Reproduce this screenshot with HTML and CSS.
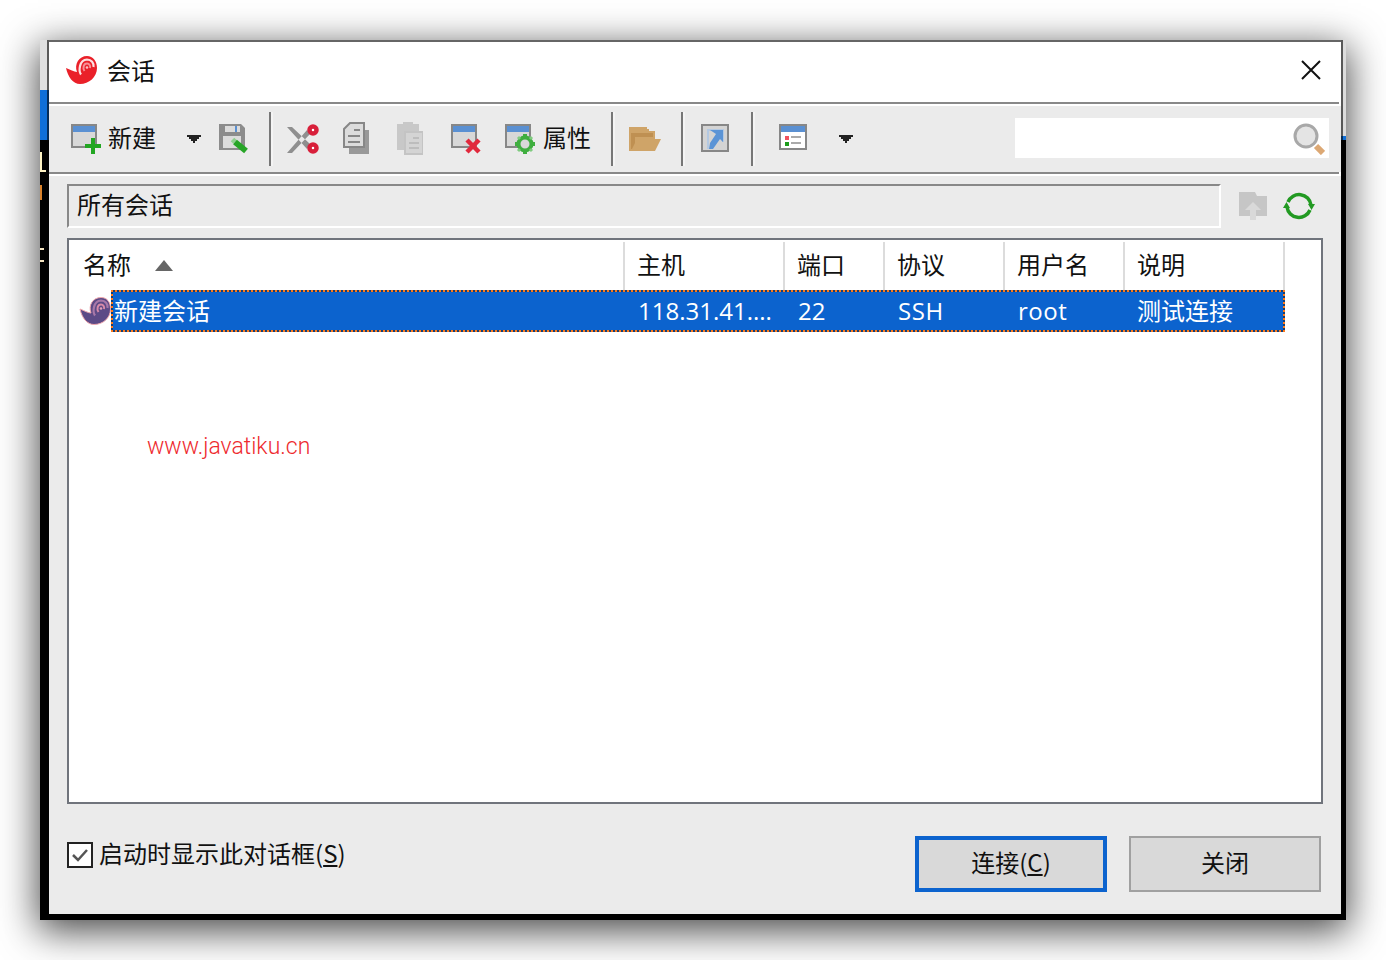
FILE: index.html
```html
<!DOCTYPE html>
<html lang="zh-CN">
<head>
<meta charset="utf-8">
<title>会话</title>
<link rel="stylesheet" href="styles.css">
</head>
<body>
<div class="stage">
<div class="frame">
<div class="window">

  <header class="titlebar">
    <svg class="logo" width="32" height="28" viewBox="0 0 32 28">
      <path fill="#ea2029" d="M1 12C5 13.500 9 16 12 16C9 8 14 0 22 0C28 0 32 5 32 12C32 21 24 28 15 28C8 28 3 21 1 12Z"/>
      <path fill="none" stroke="#fde0e0" stroke-width="2.200" d="M16 18.500C13.500 15 14 4 22 3.500C26.500 3.500 29 7 28.500 11"/>
      <path fill="none" stroke="#f68f94" stroke-width="2" d="M19.500 15C17.500 12 18.500 7.500 22 7.500C24.500 7.500 25.500 10 25 12"/>
      <circle cx="22" cy="11.500" r="1.300" fill="#f9c0c2"/>
    </svg>
    <span class="title-text">会话</span>
    <svg class="close" width="20" height="20" viewBox="0 0 20 20">
      <path fill="none" stroke="#111" stroke-width="2" d="M1 1L19 19M19 1L1 19"/>
    </svg>
  </header>

  <div class="rule"></div>

  <div class="toolbar">
    <svg class="ic-new" width="30" height="34" viewBox="0 0 30 34">
      <rect x="1" y="3" width="24" height="22" fill="#d8d8d8" stroke="#878787" stroke-width="2"/>
      <rect x="2" y="4" width="22" height="6" fill="#5a90d2"/>
      <path fill="#22a622" d="M20 16h4v6h6v4h-6v6h-4v-6h-6v-4h6z"/>
    </svg>
    <span class="tb-label tb-label-new">新建</span>
    <svg class="arrow arrow-new" width="14" height="8" viewBox="0 0 14 8"><path fill="#222" d="M0 0H14V2H12V4H10V6H8V8H6V6H4V4H2V2H0Z"/></svg>
    <svg class="ic-save" width="30" height="34" viewBox="0 0 30 34">
      <path fill="#8c8c8c" d="M0 2H22L26 6V28H0Z"/>
      <rect x="6" y="4" width="15" height="6" fill="#dcdcdc"/>
      <rect x="16" y="4" width="2" height="6" fill="#5a90d2"/>
      <rect x="4" y="14" width="18" height="12" fill="#dcdcdc"/>
      <path fill="none" stroke="#8fd08f" stroke-width="5" d="M13.500 17.500L16 20"/>
      <path fill="none" stroke="#27a527" stroke-width="6" d="M16 20L27 29"/>
    </svg>
    <span class="tb-sep tb-sep-a"></span>
    <svg class="ic-cut" width="32" height="34" viewBox="0 0 32 34">
      <path fill="#8f8f8f" d="M0 5H5L23 22L20 27ZM0 31H5L23 12L20 8Z"/>
      <circle cx="26" cy="8" r="3.500" fill="#fff" stroke="#d81f3a" stroke-width="4.500"/>
      <circle cx="26" cy="26" r="3.500" fill="#fff" stroke="#d81f3a" stroke-width="4.500"/>
    </svg>
    <svg class="ic-copy" width="26" height="34" viewBox="0 0 26 34">
      <rect x="6" y="8" width="20" height="24" fill="#999"/>
      <path fill="#dcdcdc" stroke="#878787" stroke-width="2" d="M7 1H21V25H1V7Z"/>
      <path fill="none" stroke="#878787" stroke-width="2" d="M11 8H17M5 14H17M5 20H17"/>
    </svg>
    <svg class="ic-paste" width="26" height="34" viewBox="0 0 26 34">
      <path fill="#c8c8c8" d="M6 0H16V2H22V28H0V2H6Z"/>
      <rect x="8" y="10" width="18" height="22" fill="#d4d4d4" stroke="#c4c4c4" stroke-width="2"/>
      <path fill="none" stroke="#bdbdbd" stroke-width="2" d="M16 16H22M12 21H22M12 26H22"/>
    </svg>
    <svg class="ic-del" width="30" height="34" viewBox="0 0 30 34">
      <rect x="1" y="3" width="24" height="22" fill="#d8d8d8" stroke="#878787" stroke-width="2"/>
      <rect x="2" y="4" width="22" height="6" fill="#5a90d2"/>
      <path fill="none" stroke="#e1283c" stroke-width="4.500" d="M16 18L28 30M28 18L16 30"/>
    </svg>
    <svg class="ic-prop" width="30" height="34" viewBox="0 0 30 34">
      <rect x="1" y="3" width="24" height="22" fill="#d8d8d8" stroke="#878787" stroke-width="2"/>
      <rect x="2" y="4" width="22" height="6" fill="#5a90d2"/>
      <circle cx="20" cy="22" r="6.500" fill="#d8d8d8" stroke="#3fae3f" stroke-width="4"/>
      <path fill="none" stroke="#3fae3f" stroke-width="4" d="M20 12V15M20 29V32M10 22H13M27 22H30"/>
      <path fill="none" stroke="#7fcb7f" stroke-width="3" d="M13 15L15 17M27 15L25 17M13 29L15 27M27 29L25 27"/>
    </svg>
    <span class="tb-label tb-label-prop">属性</span>
    <span class="tb-sep tb-sep-b"></span>
    <svg class="ic-folder" width="32" height="34" viewBox="0 0 32 34">
      <path fill="#cfa468" d="M0 5H18V7H20V9H26V29H0Z"/>
      <rect x="2" y="11" width="22" height="4" fill="#bf9052"/>
      <path fill="#bf9052" d="M2 15H6V25H4V27H2Z"/>
      <path fill="#cfa468" d="M8 17H32L26 29H2Z"/>
    </svg>
    <span class="tb-sep tb-sep-b"></span>
    <svg class="ic-link" width="28" height="34" viewBox="0 0 28 34">
      <rect x="1" y="3" width="26" height="26" fill="#d4d4d4" stroke="#878787" stroke-width="2"/>
      <path fill="#b4c9e2" d="M6 7H23V20H21V9H8V27H6Z"/>
      <path fill="#5b94d6" d="M9 8H22V20L19 17L12 27H8L9 21L15 12Z"/>
    </svg>
    <span class="tb-sep tb-sep-c"></span>
    <svg class="ic-list" width="28" height="34" viewBox="0 0 28 34">
      <rect x="1" y="3" width="26" height="24" fill="#fff" stroke="#878787" stroke-width="2"/>
      <rect x="2" y="4" width="24" height="6" fill="#5a90d2"/>
      <rect x="6" y="14" width="4" height="4" fill="#f0525e"/>
      <rect x="6" y="20" width="4" height="4" fill="#1c9c1c"/>
      <path fill="none" stroke="#aaa" stroke-width="2" d="M12 15H22M12 21H22"/>
    </svg>
    <svg class="arrow arrow-list" width="14" height="8" viewBox="0 0 14 8"><path fill="#222" d="M0 0H14V2H12V4H10V6H8V8H6V6H4V4H2V2H0Z"/></svg>
    <div class="search">
      <svg width="32" height="32" viewBox="0 0 32 32">
        <circle cx="13" cy="13" r="11" fill="#e4e4e4" stroke="#a8a8a8" stroke-width="3"/>
        <path fill="none" stroke="#dca874" stroke-width="6" d="M23 23L30 30"/>
      </svg>
    </div>
  </div>

  <div class="rule"></div>

  <main class="content">
    <div class="path-row">
      <div class="path-box">所有会话</div>
      <svg class="ic-up" width="28" height="28" viewBox="0 0 28 28">
        <path fill="#c6c6c6" d="M0 0H16L18 4H28V24H0Z"/>
        <path fill="#d9d9d9" d="M14 10L22 18H17V28H11V18H6Z"/>
      </svg>
      <svg class="ic-refresh" width="32" height="28" viewBox="0 0 32 28">
        <path fill="none" stroke="#229a22" stroke-width="3.500" d="M5 10A12 12 0 0 1 28 13"/>
        <path fill="none" stroke="#229a22" stroke-width="3.500" d="M27 18A12 12 0 0 1 4 15"/>
        <path fill="#229a22" d="M25 12H32L28.500 18ZM0 16H7L3.500 10Z"/>
      </svg>
    </div>

    <section class="list">
      <div class="list-head">
        <div class="hcell hcell-name">名称<svg class="sort" width="18" height="11" viewBox="0 0 18 11"><path fill="#666" d="M9 0L18 11H0Z"/></svg></div>
        <div class="hcell hcell-host">主机</div>
        <div class="hcell hcell-port">端口</div>
        <div class="hcell hcell-proto">协议</div>
        <div class="hcell hcell-user">用户名</div>
        <div class="hcell hcell-note">说明</div>
      </div>
      <div class="list-row">
        <svg class="row-icon" width="32" height="30" viewBox="0 0 32 28">
          <path fill="#5c4a86" stroke="#f0a8ae" stroke-width="1" d="M1 12C5 13.500 9 16 12 16C9 8 14 0.500 22 0.500C28 0.500 31.500 5 31.500 12C31.500 21 24 27.500 15 27.500C8 27.500 3 21 1 12Z"/>
          <path fill="none" stroke="#a878a8" stroke-width="2.200" d="M16 18.500C13.500 15 14 4 22 3.500C26.500 3.500 29 7 28.500 11"/>
          <path fill="none" stroke="#d88aa8" stroke-width="2" d="M19.500 15C17.500 12 18.500 7.500 22 7.500C24.500 7.500 25.500 10 25 12"/>
          <circle cx="22" cy="11.500" r="1.300" fill="#e0a0b8"/>
        </svg>
        <div class="band">
          <span class="cell cell-name">新建会话</span>
          <span class="cell cell-host">118.31.41....</span>
          <span class="cell cell-port">22</span>
          <span class="cell cell-proto">SSH</span>
          <span class="cell cell-user">root</span>
          <span class="cell cell-note">测试连接</span>
        </div>
      </div>
      <a class="watermark">www.javatiku.cn</a>
    </section>

    <footer class="footer">
      <label class="startup">
        <span class="checkbox">
          <svg width="22" height="22" viewBox="0 0 22 22"><path fill="none" stroke="#555" stroke-width="2.500" d="M4 11L9 16L18 6"/></svg>
        </span>
        <span class="startup-text">启动时显示此对话框(<u>S</u>)</span>
      </label>
      <button class="btn btn-primary" type="button">连接(<u>C</u>)</button>
      <button class="btn btn-plain" type="button">关闭</button>
    </footer>
  </main>

</div>
</div>
</div>
</body>
</html>
```
FILE: styles.css
```css
* { box-sizing: border-box; }

html, body {
  margin: 0;
  background: #fff;
}

body {
  font-family: "Noto Sans CJK SC", "Noto Sans", sans-serif;
  font-size: 24px;
  color: #111;
}

.stage {
  width: 1386px;
  height: 960px;
  padding: 40px;
  overflow: hidden;
}

.frame {
  width: 1306px;
  height: 880px;
  padding: 0 3px 6px 7px;
  box-shadow: 0 9px 36px 2px rgba(0, 0, 0, 0.72);
  background:
    linear-gradient(#fff3c4, #fff3c4) 0 112px / 2px 20px no-repeat,
    linear-gradient(#fff3c4, #fff3c4) 0 130px / 6px 2px no-repeat,
    linear-gradient(#d9822b, #d9822b) 0 145px / 2px 15px no-repeat,
    linear-gradient(#f3e3c0, #f3e3c0) 0 208px / 4px 2px no-repeat,
    linear-gradient(#f3e3c0, #f3e3c0) 0 220px / 4px 2px no-repeat,
    linear-gradient(#000, #000) left bottom / 100% 6px no-repeat,
    linear-gradient(#e0e0e0 0 50px, #0f6fd8 50px 100px, #000 100px) left top / 9px 100% no-repeat,
    linear-gradient(#dcdcdc 0 96px, #0f6fd8 96px 100px, #000 100px) right top / 5px 100% no-repeat,
    #fff;
}

.window {
  height: 874px;
  display: flex;
  flex-direction: column;
  border: 2px solid rgba(0, 0, 0, 0.6);
  border-bottom: 0;
}

/* title bar */
.titlebar {
  flex: none;
  height: 60px;
  padding: 0 20px 4px 16px;
  display: flex;
  align-items: center;
  background: #fff;
}

.title-text {
  margin-left: 10px;
  line-height: 30px;
}

.close { margin-left: auto; }

.rule {
  flex: none;
  height: 4px;
  border-right: 2px solid #fff;
  background: linear-gradient(#888 50%, #fff 50%);
}

/* toolbar */
.toolbar {
  flex: none;
  height: 66px;
  padding: 0 12px 0 22px;
  display: flex;
  align-items: center;
  background: #ebebeb;
}

.toolbar svg { flex: none; }

.tb-label {
  line-height: 30px;
  margin-bottom: 4px;
}

.tb-label-new { margin-left: 7px; }
.tb-label-prop { margin-left: 8px; }

.arrow-new { margin-left: 31px; }
.arrow-list { margin-left: 32px; }

.ic-save { margin-left: 18px; }
.ic-cut { margin-left: 16px; }
.ic-copy { margin-left: 24px; }
.ic-paste { margin-left: 28px; }
.ic-del { margin-left: 28px; }
.ic-prop { margin-left: 24px; }
.ic-folder { margin-left: 16px; }
.ic-link { margin-left: 18px; }
.ic-list { margin-left: 26px; }

.tb-sep {
  flex: none;
  width: 2px;
  height: 54px;
  background: #777;
  box-shadow: 2px 0 0 #f4f4f4;
}

.tb-sep-a,
.tb-sep-b { margin-left: 20px; }
.tb-sep-c { margin-left: 22px; }

.search {
  margin: 0 0 2px auto;
  width: 314px;
  height: 40px;
  padding: 2px 4px 0 0;
  display: flex;
  align-items: center;
  justify-content: flex-end;
  background: #fff;
}

/* content */
.content {
  flex: 1;
  min-height: 0;
  padding: 8px 18px 0;
  display: flex;
  flex-direction: column;
  background: #ebebeb;
}

.path-row {
  flex: none;
  height: 44px;
  display: flex;
  align-items: center;
}

.path-box {
  width: 1154px;
  height: 44px;
  padding-left: 8px;
  line-height: 36px;
  border: 2px solid;
  border-color: #888 #fff #fff #888;
}

.ic-up { margin-left: 18px; }
.ic-refresh { margin-left: 16px; }

/* list */
.list {
  flex: none;
  position: relative;
  height: 566px;
  margin-top: 10px;
  background: #fff;
  border: 2px solid #70747c;
}

.list-head {
  height: 50px;
  padding-top: 2px;
  display: flex;
}

.hcell {
  flex: none;
  padding: 0 0 4px 12px;
  line-height: 44px;
  border-right: 2px solid #dcdcdc;
  display: flex;
  align-items: center;
}

.hcell-name { width: 556px; padding-left: 14px; }
.hcell-host { width: 160px; }
.hcell-port { width: 100px; }
.hcell-proto { width: 120px; }
.hcell-user { width: 120px; }
.hcell-note { width: 160px; }

.sort { margin: 2px 0 0 24px; }

.list-row {
  height: 42px;
  padding-left: 10px;
  display: flex;
  align-items: center;
}

.row-icon { flex: none; }

.band {
  width: 1174px;
  height: 42px;
  display: flex;
  align-items: center;
  color: #fff;
  line-height: 38px;
  font-family: "Open Sans", "Noto Sans CJK SC", sans-serif;
  background:
    repeating-linear-gradient(90deg, #ff7a1a 0 2px, #123f7a 2px 4px) top / 100% 2px no-repeat,
    repeating-linear-gradient(90deg, #ff7a1a 0 2px, #123f7a 2px 4px) bottom / 100% 2px no-repeat,
    repeating-linear-gradient(#ff7a1a 0 2px, #123f7a 2px 4px) left / 2px 100% no-repeat,
    repeating-linear-gradient(#ff7a1a 0 2px, #123f7a 2px 4px) right / 2px 100% no-repeat,
    #0c63ce;
}

.cell {
  flex: none;
  padding-left: 13px;
  white-space: nowrap;
}

.cell-name { width: 514px; padding-left: 3px; }
.cell-host { width: 160px; }
.cell-port { width: 100px; }
.cell-proto { width: 120px; letter-spacing: 0.6px; }
.cell-user { width: 120px; letter-spacing: 0.5px; }
.cell-note { width: 160px; padding-left: 12px; }

.watermark {
  position: absolute;
  left: 78px;
  top: 192px;
  font-family: Roboto, "Liberation Sans", sans-serif;
  font-size: 23px;
  font-weight: 300;
  line-height: 30px;
  color: #ee2a2e;
}

/* footer */
.footer {
  flex: 1;
  padding-top: 32px;
  display: flex;
  align-items: flex-start;
}

.startup {
  display: flex;
  align-items: center;
  gap: 6px;
  margin-top: 4px;
  line-height: 26px;
  margin-right: auto;
}

.startup-text { margin-bottom: 4px; }

.checkbox {
  flex: none;
  width: 26px;
  height: 26px;
  background: #fff;
  border: 2px solid #222;
  display: block;
}

.checkbox svg { display: block; }

.btn {
  flex: none;
  width: 192px;
  height: 56px;
  padding: 0 0 6px;
  font: inherit;
  color: #111;
  background: #d9d9d9;
}

.btn-primary { border: 4px solid #0c63ce; }

.btn-plain {
  margin: 0 2px 0 22px;
  border: 2px solid #a0a0a0;
}
```
